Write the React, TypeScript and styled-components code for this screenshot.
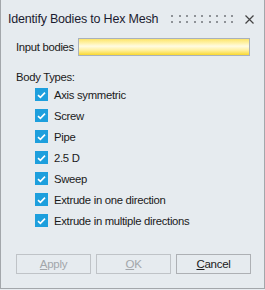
import React from "react";
import styled, { createGlobalStyle } from "styled-components";

const GlobalStyle = createGlobalStyle`
  html, body {
    margin: 0;
    padding: 0;
    background: #e6ebef;
  }
  * {
    box-sizing: border-box;
  }
`;

const types = [
  "Axis symmetric",
  "Screw",
  "Pipe",
  "2.5 D",
  "Sweep",
  "Extrude in one direction",
  "Extrude in multiple directions",
];

const App = () => {
  return (
    <>
      <GlobalStyle />
      <Frame>
        <TitleBar>
          <Title>Identify Bodies to Hex Mesh</Title>
          <Grip>
            {Array.from({ length: 18 }).map((_, i) => (
              <Dot key={i} />
            ))}
          </Grip>
          <Close>
            <svg width="9" height="9" viewBox="0 0 9 9">
              <path d="M0.5 0.5 L8.5 8.5 M8.5 0.5 L0.5 8.5" stroke="#444" strokeWidth="1.2" fill="none" />
            </svg>
          </Close>
        </TitleBar>

        <InputRow>
          <Label>Input bodies</Label>
          <Field />
        </InputRow>

        <Section>Body Types:</Section>

        <List>
          {types.map((t) => (
            <Item key={t}>
              <Box>
                <svg width="9" height="8" viewBox="0 0 9 8">
                  <path d="M1 4.2 L3.4 6.4 L8 1.6" stroke="#fff" strokeWidth="1.6" fill="none" />
                </svg>
              </Box>
              <ItemLabel>{t}</ItemLabel>
            </Item>
          ))}
        </List>

        <Buttons>
          <Button disabled>
            <u>A</u>pply
          </Button>
          <Button disabled>
            <u>O</u>K
          </Button>
          <Button>
            <u>C</u>ancel
          </Button>
        </Buttons>
      </Frame>
    </>
  );
};

export default App;

const Frame = styled.div`
  width: 265px;
  height: 289px;
  background: #e6ebef;
  border: 1px solid #a3a7ab;
  border-top: none;
  display: flex;
  flex-direction: column;
  font-family: "Liberation Sans", Arial, sans-serif;
  font-size: 11.3px;
  letter-spacing: -0.3px;
  color: #1a1a1a;
  white-space: nowrap;
`;

const TitleBar = styled.div`
  height: 37px;
  display: flex;
  align-items: center;
  padding: 1px 0 0 7px;
`;

const Title = styled.div`
  font-size: 12.5px;
  letter-spacing: -0.2px;
  color: #1b1b30;
  flex: 1;
`;

const Grip = styled.div`
  display: grid;
  grid-template-columns: repeat(9, 2px);
  column-gap: 5.5px;
  row-gap: 4px;
  margin-right: 12px;
`;

const Dot = styled.span`
  width: 2px;
  height: 2px;
  background: #8e9297;
`;

const Close = styled.div`
  width: 9px;
  height: 9px;
  display: flex;
  margin-right: 10px;
`;

const InputRow = styled.div`
  display: flex;
  align-items: center;
  padding: 1px 14px 0 15px;
  height: 19px;
`;

const Label = styled.div`
  width: 62px;
`;

const Field = styled.div`
  flex: 1;
  height: 18px;
  border: 1px solid #a9b1bb;
  background: linear-gradient(
    to bottom,
    #fde46a 0%,
    #fff2a8 25%,
    #fffbe2 45%,
    #fff0a0 70%,
    #f9d830 100%
  );
`;

const Section = styled.div`
  padding-left: 15px;
  margin-top: 13px;
  height: 16px;
  line-height: 16px;
`;

const List = styled.div`
  display: flex;
  flex-direction: column;
  padding-left: 34px;
  margin-top: 3px;
  gap: 8px;
`;

const Item = styled.div`
  display: flex;
  align-items: center;
  height: 13px;
`;

const Box = styled.div`
  width: 13px;
  height: 13px;
  background: #1d9fdd;
  display: flex;
  align-items: center;
  justify-content: center;
  margin-right: 6px;
`;

const ItemLabel = styled.span``;

const Buttons = styled.div`
  margin-top: auto;
  margin-bottom: 14px;
  display: flex;
  gap: 5px;
  padding-left: 15px;
`;

const Button = styled.button`
  width: 75px;
  height: 20px;
  border: 1px solid ${(p) => (p.disabled ? "#bfc3c7" : "#adb0b4")};
  background: #e6ebef;
  font-family: "Liberation Sans", Arial, sans-serif;
  font-size: 11.5px;
  letter-spacing: -0.3px;
  color: ${(p) => (p.disabled ? "#a2a6aa" : "#1a1a1a")};
  padding: 0;
`;
